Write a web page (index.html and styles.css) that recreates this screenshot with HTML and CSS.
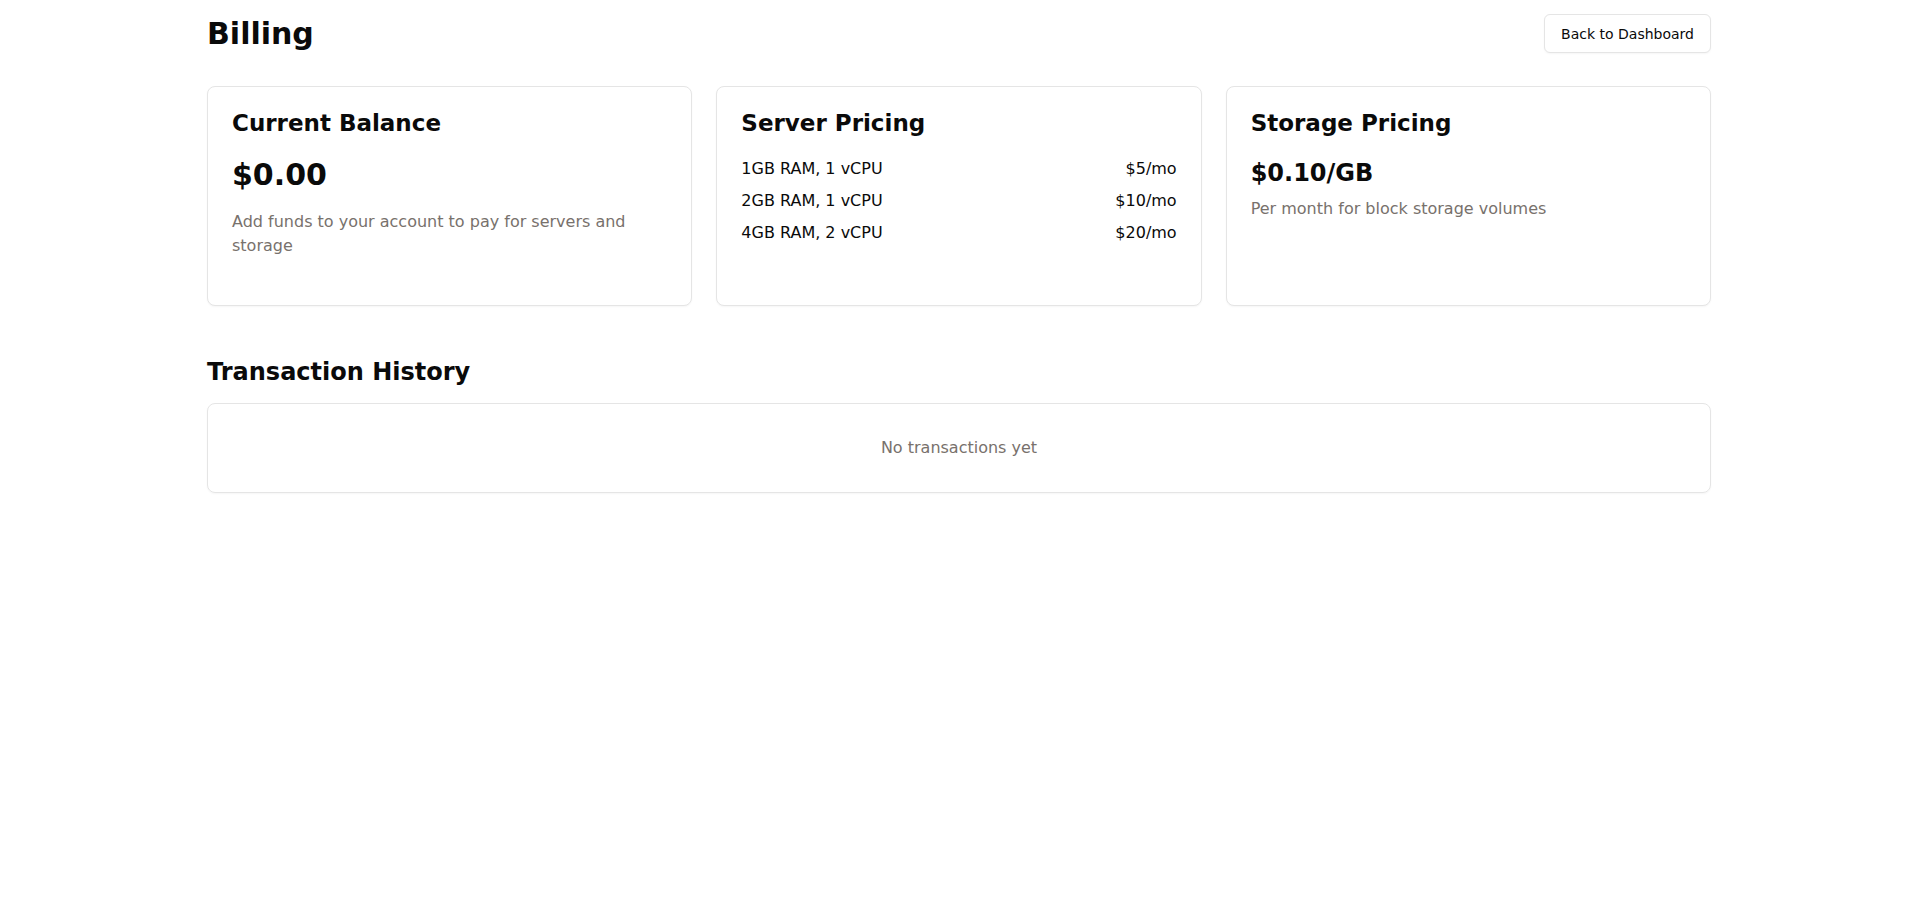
FILE: index.html
```html
<!DOCTYPE html>
<html lang="en">
<head>
<meta charset="utf-8">
<title>Billing</title>
<link rel="stylesheet" href="styles.css">
</head>
<body>
<main class="page">
  <header class="page-header">
    <h1 class="page-title">Billing</h1>
    <button class="btn-outline" type="button">Back to Dashboard</button>
  </header>

  <section class="cards">
    <div class="card">
      <h2 class="card-title">Current Balance</h2>
      <div class="balance">$0.00</div>
      <p class="muted desc">Add funds to your account to pay for servers and storage</p>
    </div>
    <div class="card">
      <h2 class="card-title">Server Pricing</h2>
      <ul class="price-list">
        <li class="price-row"><span>1GB RAM, 1 vCPU</span><span>$5/mo</span></li>
        <li class="price-row"><span>2GB RAM, 1 vCPU</span><span>$10/mo</span></li>
        <li class="price-row"><span>4GB RAM, 2 vCPU</span><span>$20/mo</span></li>
      </ul>
    </div>
    <div class="card">
      <h2 class="card-title">Storage Pricing</h2>
      <div class="storage-price">$0.10/GB</div>
      <p class="muted">Per month for block storage volumes</p>
    </div>
  </section>

  <section class="history">
    <h2 class="section-title">Transaction History</h2>
    <div class="empty-box">
      <p class="muted empty-text">No transactions yet</p>
    </div>
  </section>
</main>
</body>
</html>
```

FILE: styles.css
```css
* {
  box-sizing: border-box;
}

html, body {
  margin: 0;
  padding: 0;
  background: #ffffff;
}

body {
  font-family: "DejaVu Sans", "Liberation Sans", sans-serif;
  font-size: 16px;
  line-height: 24px;
  color: #0a0a0a;
}

.page {
  max-width: 1536px;
  margin: 0 auto;
  padding: 13px 16px 32px;
}

.page-header {
  display: flex;
  align-items: center;
  justify-content: space-between;
  height: 40px;
  margin-bottom: 33px;
}

.page-title {
  margin: 0;
  font-size: 30px;
  line-height: 40px;
  font-weight: 700;
  position: relative;
  top: 1px;
}

.btn-outline {
  font-family: inherit;
  font-size: 14px;
  line-height: 19px;
  padding: 10px 16px 8px;
  color: #0a0a0a;
  background: #ffffff;
  border: 1px solid #e5e5e5;
  border-radius: 6px;
  box-shadow: 0 1px 2px rgba(0, 0, 0, 0.04);
  cursor: pointer;
}

.cards {
  display: grid;
  grid-template-columns: repeat(3, 1fr);
  gap: 24px;
}

.card {
  min-height: 220px;
  padding: 20px 24px 24px;
  border: 1px solid #e5e5e5;
  border-radius: 8px;
  background: #ffffff;
  box-shadow: 0 1px 2px rgba(0, 0, 0, 0.04);
}

.card-title {
  margin: 0 0 18px;
  font-size: 23px;
  line-height: 32px;
  font-weight: 700;
}

.balance {
  font-size: 30px;
  line-height: 36px;
  font-weight: 700;
  margin-bottom: 17px;
}

.storage-price {
  font-size: 24px;
  line-height: 32px;
  font-weight: 700;
  margin-top: 1px;
  margin-bottom: 8px;
}

.muted {
  color: #78716c;
  margin: 0;
}

.price-list {
  list-style: none;
  margin: 1px 0 0;
  padding: 0;
  display: flex;
  flex-direction: column;
  gap: 8px;
}

.price-row {
  display: flex;
  justify-content: space-between;
  color: #0a0a0a;
}

.history {
  margin-top: 50px;
}

.section-title {
  margin: 0 0 15px;
  font-size: 24px;
  line-height: 32px;
  font-weight: 700;
}

.empty-box {
  border: 1px solid #e5e5e5;
  border-radius: 8px;
  padding: 32px;
  box-shadow: 0 1px 2px rgba(0, 0, 0, 0.04);
}

.empty-text {
  text-align: center;
}
```
